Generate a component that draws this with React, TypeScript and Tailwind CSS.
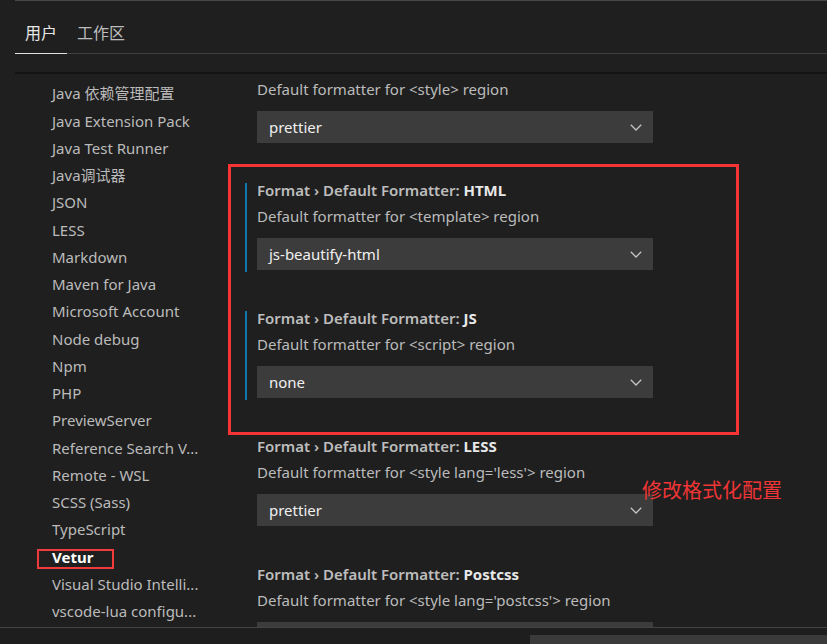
import React from 'react';

const FONT = '"Noto Sans", "Noto Sans CJK SC", sans-serif';

const sections = [
  'Java 依赖管理配置',
  'Java Extension Pack',
  'Java Test Runner',
  'Java调试器',
  'JSON',
  'LESS',
  'Markdown',
  'Maven for Java',
  'Microsoft Account',
  'Node debug',
  'Npm',
  'PHP',
  'PreviewServer',
  'Reference Search V...',
  'Remote - WSL',
  'SCSS (Sass)',
  'TypeScript',
  'Vetur',
  'Visual Studio Intelli...',
  'vscode-lua configu...',
];

type Setting = { key: string; desc: string; value: string; focused?: boolean };

// last one's value sits below the fold, so it is left blank
const settings: Setting[] = [
  { key: 'HTML', desc: 'Default formatter for <template> region', value: 'js-beautify-html', focused: true },
  { key: 'JS', desc: 'Default formatter for <script> region', value: 'none', focused: true },
  { key: 'LESS', desc: "Default formatter for <style lang='less'> region", value: 'prettier' },
  { key: 'Postcss', desc: "Default formatter for <style lang='postcss'> region", value: '' },
];

const Chevron = () => (
  <svg width="12" height="7" viewBox="0 0 12 7" fill="none">
    <polyline points="0.8,0.8 6,6 11.2,0.8" stroke="#c5c5c5" strokeWidth="1.3" />
  </svg>
);

const Select: React.FC<{ value: string }> = ({ value }) => (
  <div className="flex h-[32px] w-[396px] shrink-0 items-center justify-between bg-[#3c3c3c] pl-[12px] pr-[11px] text-[15px] text-[#f0f0f0]">
    <span>{value}</span>
    <Chevron />
  </div>
);

const SettingItem: React.FC<{ s: Setting }> = ({ s }) => (
  <div
    className={`mb-[39px] border-l-2 pb-[2px] pl-[10px] ${s.focused ? 'border-[#1077b0]' : 'border-transparent'}`}
  >
    <div className="whitespace-nowrap text-[15px] font-semibold leading-[14px] text-[#bdbdbd]">
      Format › Default Formatter: <span className="font-bold text-[#e8e8e8]">{s.key}</span>
    </div>
    <div className="mt-[12px] whitespace-nowrap text-[15px] leading-[14px] text-[#bbbbbb]">{s.desc}</div>
    <div className="mt-[15px]">
      <Select value={s.value} />
    </div>
  </div>
);

export default function App() {
  return (
    <div className="relative flex h-[644px] w-[827px] flex-col overflow-hidden bg-[#1f1f1f]" style={{ fontFamily: FONT }}>
      {/* header with tabs */}
      <div className="ml-[15px] h-[72px] border-t border-[#474747]">
        <div className="mt-[22px] flex border-b border-[#3f3f3f]">
          <div className="-mb-px border-b border-[#e0e0e0] px-[10px] pb-[10px] text-[16px] leading-[20px] text-[#e7e7e7]">用户</div>
          <div className="px-[10px] pb-[10px] text-[16px] leading-[20px] text-[#bdbdbd]">工作区</div>
        </div>
      </div>
      <div className="ml-[15px] h-[2px] bg-[#141414]" />

      {/* body */}
      <div className="flex min-h-0 flex-1 overflow-hidden pl-[15px]">
        <div className="w-[230px] shrink-0 pl-[37px] pt-[6px]">
          {sections.map((name) => (
            <div
              key={name}
              className={`flex h-[27.26px] items-center whitespace-nowrap text-[15px] ${name === 'Vetur' ? 'font-bold text-white' : 'text-[#bbbbbb]'}`}
            >
              {name}
            </div>
          ))}
        </div>
        <div className="flex-1">
          <div className="mb-[40px] pl-[12px] pt-[8px]">
            <div className="whitespace-nowrap text-[15px] leading-[14px] text-[#bbbbbb]">Default formatter for &lt;style&gt; region</div>
            <div className="mt-[15px]">
              <Select value="prettier" />
            </div>
          </div>
          {settings.map((s) => (
            <SettingItem key={s.key} s={s} />
          ))}
        </div>
      </div>

      {/* bottom panel edge */}
      <div className="h-[17px] border-t border-[#444444] bg-[#1e1e1e]">
        <div className="ml-[530px] mt-[7px] h-[9px] bg-[#3a3a3a]" />
      </div>

      {/* annotations */}
      <div className="absolute left-[228px] top-[164px] h-[271px] w-[511px] border-[3px] border-[#f53535]" />
      <div className="absolute left-[37px] top-[549px] h-[20px] w-[77px] border-2 border-[#ef3b3b]" />
      <div
        className="absolute left-[642px] top-[477px] text-[20px] leading-[26px] text-[#ef3535]"
        style={{ fontFamily: '"Noto Sans CJK SC", sans-serif' }}
      >
        修改格式化配置
      </div>
    </div>
  );
}
